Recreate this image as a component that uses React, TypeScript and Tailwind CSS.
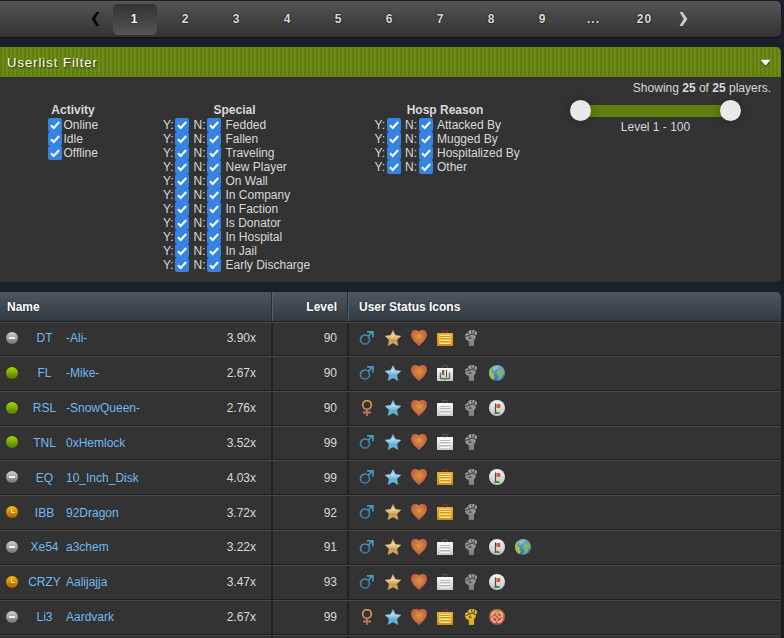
import type { ReactNode } from 'react';

const pages = ['1', '2', '3', '4', '5', '6', '7', '8', '9', '...', '20'];
const specials = ['Fedded', 'Fallen', 'Traveling', 'New Player', 'On Wall', 'In Company', 'In Faction', 'Is Donator', 'In Hospital', 'In Jail', 'Early Discharge'];
const reasons = ['Attacked By', 'Mugged By', 'Hospitalized By', 'Other'];

type Player = { status: 'off' | 'on' | 'idle'; tag: string; name: string; ratio: string; level: number; icons: string[]; short?: boolean; low?: boolean };
const players: Player[] = [
  { status: 'off', tag: 'DT', name: '-Ali-', ratio: '3.90x', level: 90, icons: ['male', 'gold', 'heart', 'caseGold', 'fist'], short: true },
  { status: 'on', tag: 'FL', name: '-Mike-', ratio: '2.67x', level: 90, icons: ['male', 'blue', 'heart', 'caseLaw', 'fist', 'globe'] },
  { status: 'on', tag: 'RSL', name: '-SnowQueen-', ratio: '2.76x', level: 90, icons: ['female', 'blue', 'heart', 'case', 'fist', 'flag'] },
  { status: 'on', tag: 'TNL', name: '0xHemlock', ratio: '3.52x', level: 99, icons: ['male', 'blue', 'heart', 'case', 'fist'], short: true, low: true },
  { status: 'off', tag: 'EQ', name: '10_Inch_Disk', ratio: '4.03x', level: 99, icons: ['male', 'blue', 'heart', 'caseGold', 'fist', 'flag'], low: true },
  { status: 'idle', tag: 'IBB', name: '92Dragon', ratio: '3.72x', level: 92, icons: ['male', 'gold', 'heart', 'caseGold', 'fist'], low: true },
  { status: 'off', tag: 'Xe54', name: 'a3chem', ratio: '3.22x', level: 91, icons: ['male', 'gold', 'heart', 'case', 'fist', 'flag', 'globe'] },
  { status: 'idle', tag: 'CRZY', name: 'Aalijajja', ratio: '3.47x', level: 93, icons: ['male', 'gold', 'heart', 'case', 'fist', 'flag'] },
  { status: 'off', tag: 'Li3', name: 'Aardvark', ratio: '2.67x', level: 99, icons: ['female', 'blue', 'heart', 'caseGold', 'fistGold', 'target'] },
];

function Gradients() {
  const list: [string, string[]][] = [
    ['g-gold', ['#d9a760', '#eed6a0', '#c99a4e', '#dcb26c']],
    ['g-blue', ['#78b8e0', '#b4dcf2', '#62aed8', '#68b4dc']],
    ['g-case', ['#fafafa', '#c9c9c9']],
    ['g-caseGold', ['#f0b030', '#d08a18']],
    ['g-fist', ['#a9a9a9', '#7b7b7b']],
    ['g-fistGold', ['#f0cc3c', '#d9a41c']],
    ['g-ball', ['#f2f2f2', '#c3c3c3']],
    ['g-globe', ['#6fa9d8', '#2a75a8']],
    ['g-target', ['#d08040', '#c04640']],
    ['g-off', ['#d0d0d0', '#727272']],
    ['g-on', ['#a3d900', '#537800']],
    ['g-idle', ['#ffbf00', '#b25900']],
  ];
  return (
    <svg className="absolute size-0">
      <defs>
        {list.map(([id, stops]) => (
          <linearGradient key={id} id={id} x1="0" y1="0" x2="0" y2="1">
            {stops.map((c, i) => <stop key={i} offset={i / (stops.length - 1)} stopColor={c} />)}
          </linearGradient>
        ))}
        <linearGradient id="g-male" gradientUnits="userSpaceOnUse" x1="0" y1="0" x2="0" y2="16">
          <stop stopColor="#48a2c8" />
          <stop offset="1" stopColor="#3f6f9c" />
        </linearGradient>
        <linearGradient id="g-female" gradientUnits="userSpaceOnUse" x1="0" y1="0" x2="0" y2="16">
          <stop stopColor="#d8a050" />
          <stop offset="1" stopColor="#c06464" />
        </linearGradient>
        <radialGradient id="g-heart" cx=".5" cy=".42" r=".6">
          <stop offset="0" stopColor="#dc9c3c" />
          <stop offset=".5" stopColor="#cc7442" />
          <stop offset="1" stopColor="#bd5145" />
        </radialGradient>
      </defs>
    </svg>
  );
}

function drawing(kind: string): ReactNode {
  switch (kind) {
    case 'male':
      return (
        <g fill="none" stroke="url(#g-male)" strokeWidth="1.7">
          <circle cx="6" cy="9.500" r="4.500" />
          <path d="M9.200 6.300 13.300 2.200M8 1.900h5.900V7.500" />
        </g>
      );
    case 'female':
      return (
        <g fill="none" stroke="url(#g-female)" strokeWidth="1.8">
          <circle cx="8" cy="5" r="4.3" />
          <path d="M8 9.4V16M4 12.500h8" />
        </g>
      );
    case 'gold':
    case 'blue':
      return (
        <path
          d="M8 .2 10.400 5.300 16 6 11.900 9.900 13.100 15.700 8 12.900 2.900 15.700 4.100 9.900 0 6 5.600 5.300z"
          fill={kind === 'gold' ? 'url(#g-gold)' : 'url(#g-blue)'}
          stroke={kind === 'gold' ? '#d9ae66' : '#70b6de'}
          strokeWidth=".3"
        />
      );
    case 'heart':
      return <path d="M8 1.500C7 .3 5.500 0 4 0 1.500 0 0 2 0 4.500 0 8.500 4 12.500 8 16c4-3.500 8-7.500 8-11.500C16 2 14.500 0 12 0 10.500 0 9 .3 8 1.500z" fill="url(#g-heart)" />;
    case 'case':
    case 'caseGold':
    case 'caseLaw': {
      const gold = kind === 'caseGold';
      return (
        <>
          <path d="M5.500 3V1.500Q5.500.500 6.500.500h3q1 0 1 1V3" fill="none" stroke={gold ? '#962c26' : '#5c5c5c'} strokeWidth="1" />
          <rect x="0" y="3" width="16" height="13" rx=".5" fill={gold ? 'url(#g-caseGold)' : 'url(#g-case)'} />
          {kind === 'caseLaw' ? (
            <>
              <path d="M3.500 7.500v6h3.200l1.300 1 1.300-1h3.200v-6" fill="none" stroke="#54764d" strokeWidth="1.300" />
              <path d="M6 5v5" stroke="#b04444" strokeWidth="2" />
              <path d="M7.500 5v8" stroke="#bbb" strokeWidth="1" />
              <path d="M9.500 5v7" stroke="#484848" strokeWidth="1" />
            </>
          ) : (
            <>
              {gold && <path d="M2 5h12v9H2z" fill="#f2c440" />}
              <path d="M3 7.500h10M3 10.500h10M3 13.500h10" stroke={gold ? '#fbe9a8' : '#f6f6f6'} />
              <path d="M3 5.500h10" stroke={gold ? '#fbe9a8' : '#fafafa'} />
              <path d="M3 8.500h10M3 11.500h10M3 6.500h10" stroke={gold ? '#cf951c' : '#b8b8b8'} />
            </>
          )}
        </>
      );
    }
    case 'fist':
    case 'fistGold':
      return (
        <>
          <path
            d="M1.800 6.500 2.600 4 5 2.800 5.600.9 8 0 9.400.6 11 .1 12.200 1 13.900 1.800 13.800 4.200 12.700 6 12.700 8 11 10.600V16H5.800v-4.800L2.800 9.400z"
            fill={kind === 'fist' ? 'url(#g-fist)' : 'url(#g-fistGold)'}
          />
          <path d="M5.200 2.600 6.500 5.500M8.500.6 9.200 3.900M11.600.8 11 4.600M2.300 6.600 5.800 5.400M7.300 6.500 6 8.300 8.600 8.200M6.500 5 9.600 4.300 12.800 5.600" stroke="#333" strokeWidth=".9" fill="none" />
        </>
      );
    case 'globe':
      return (
        <>
          <circle cx="8" cy="8" r="8" fill="url(#g-globe)" />
          <path d="M2 2.700C.5 4.300-.2 6.300.1 9c.4 2.800 1.900 4.900 4.200 6l1.500-2.500-1.300-2 .7-2-2.200-1L2 5.700l1-1.600z" fill="#a4bf45" />
          <path d="M4.500 1.500 9 .6l1 1.700L8.500 4l-2.200.8L3 4.500z" fill="#8fbcae" />
          <path d="m8 6 2.800-1.900 3.700.8 1 3.500-2.300 1.800-.8 3.300-2.500.7-1-4.200L7 8z" fill="#84b070" />
          <path d="m5 3 2.500.6-2 2-1.700.3M8 13.600l2 1" stroke="#91bedc" strokeWidth=".9" fill="none" />
        </>
      );
    case 'flag':
      return (
        <>
          <circle cx="8" cy="8" r="8" fill="url(#g-ball)" />
          <path d="M4.500 13.500Q6 11.200 9 12q2 .4 2.200 1.400-3 1.200-6.700.1z" fill="#419336" />
          <path d="M6.500 3.500v9" stroke="#594537" strokeWidth="1.100" />
          <path d="M7 4h4.200v4H7z" fill="#c65a3d" />
          <path d="M7 4h1.500v4H7z" fill="#db8a54" />
        </>
      );
    default:
      return (
        <>
          <circle cx="8" cy="8" r="8" fill="url(#g-target)" />
          <circle cx="8" cy="8" r="5.500" fill="none" stroke="#f4ddd0" strokeWidth="1.200" strokeDasharray="6.640 2" strokeDashoffset="-1" />
          <path d="M8 3.500v9M3.500 8h9" stroke="#f0cdbb" strokeWidth="1" />
          <circle cx="8" cy="8" r="1.200" fill="#c9603f" />
        </>
      );
  }
}

function StatusIcon({ kind }: { kind: string }) {
  return <svg viewBox="0 0 16 16" className="size-4 shrink-0">{drawing(kind)}</svg>;
}

function Presence({ status }: { status: Player['status'] }) {
  const fill = status === 'off' ? 'url(#g-off)' : status === 'on' ? 'url(#g-on)' : 'url(#g-idle)';
  return (
    <svg viewBox="0 0 12 12" className="ml-1.5 size-3 shrink-0">
      <circle cx="6" cy="6" r="6" fill={fill} />
      {status === 'off' && <path d="M3 5h6v2H3z" fill="#f5f5f5" />}
      {status === 'idle' && <path d="M5.500 3v3.500H9" fill="none" stroke="#fff3d6" />}
    </svg>
  );
}

function Check() {
  return (
    <svg viewBox="0 0 14 14" className="size-3.5 shrink-0">
      <rect width="14" height="14" rx="2" fill="#3584e4" />
      <path d="m3 7.300 2.700 2.700L11.200 4" fill="none" stroke="#fff" strokeWidth="2" />
    </svg>
  );
}

function YesNo({ label }: { label: string }) {
  return (
    <div className="flex h-3.5 items-center">
      <span className="w-3">Y:</span><Check />
      <span className="ml-[4.5px] w-[13.5px]">N:</span><Check />
      <span className="ml-[4.5px]">{label}</span>
    </div>
  );
}

function YesNoTight({ label }: { label: string }) {
  return (
    <div className="flex h-3.5 items-center">
      <span className="ml-[-0.5px] w-[12.5px]">Y:</span><Check />
      <span className="ml-1 w-3.5">N:</span><Check />
      <span className="ml-1">{label}</span>
    </div>
  );
}

export default function App() {
  return (
    <div className="h-[638px] w-[784px] overflow-hidden bg-[#192028] pt-px font-['Liberation_Sans',Arial,sans-serif] text-xs text-[#d9d9d9]">
      <Gradients />
      <div className="w-[781px]">
        <nav className="flex h-9 items-center rounded-r-[5px] bg-linear-to-b from-[#555] to-[#333] pl-[91px] font-bold tracking-[1px] shadow-[0_1px_2px_#0008] text-shadow-[0_0_2px_#000]">
          <svg viewBox="0 0 9 14" className="mr-[13px] h-3.5 w-[9px] shrink-0"><path d="M5.400 0h3L4.100 7l4.300 7h-3L.5 7z" fill="#050505" /></svg>
          <div className="flex gap-[7px]">
            {pages.map((p) => (
              <span key={p} className={`flex h-[31px] w-11 items-center justify-center rounded-[5px] pr-px ${p === '1' ? 'bg-linear-to-b from-[#333] to-[#555] text-white' : ''}`}>{p}</span>
            ))}
          </div>
          <svg viewBox="0 0 9 14" className="ml-3 h-3.5 w-[9px] shrink-0"><path d="M.5 0h3l4.900 7-4.900 7h-3l4.300-7z" fill="#ccc" /></svg>
        </nav>

        <section className="mt-2.5 h-[235px] overflow-hidden rounded-r-[5px] bg-[#333]">
          <header className="flex h-[30px] items-center justify-between bg-[repeating-linear-gradient(90deg,#627e0d_0_2px,#6d8a1c_2px_4px)] pr-2.5 pl-[7px] text-[13px] tracking-[1px] text-white text-shadow-[1px_1px_2px_#000a]">
            <span className="pt-0.5">Userlist Filter</span>
            <svg viewBox="0 0 11 8" className="h-2 w-[11px] drop-shadow-[0_1px_1px_#0008]"><path d="M.500 1.800h10L6.200 7H4.800z" fill="#fff" /></svg>
          </header>
          <div className="flex">
            <div className="box-content w-[50px] pt-[26px] pl-12">
              <div className="h-[15px] text-center font-bold leading-[14px]">Activity</div>
              {['Online', 'Idle', 'Offline'].map((s) => (
                <div key={s} className="flex h-3.5 items-center"><Check /><span className="ml-[1.5px]">{s}</span></div>
              ))}
            </div>
            <div className="ml-[65px] w-[148px] whitespace-nowrap pt-[26px]">
              <div className="h-[15px] w-[143px] text-center font-bold leading-[14px]">Special</div>
              {specials.map((s) => <YesNo key={s} label={s} />)}
            </div>
            <div className="ml-16 w-[146px] whitespace-nowrap pt-[26px]">
              <div className="h-[15px] w-[140px] text-center font-bold leading-[14px]">Hosp Reason</div>
              {reasons.map((s) => <YesNoTight key={s} label={s} />)}
            </div>
            <div className="flex-1 pt-1 pr-2.5 pl-[49px]">
              <div className="text-right leading-[14px]">Showing <b>25</b> of <b>25</b> players.</div>
              <div className="mt-[5px] flex h-[21px] w-[171px] items-center">
                <span className="z-10 size-[21px] shrink-0 rounded-full bg-[#e9e9e9] shadow-[0_0_10px_#0004]" />
                <span className="-mx-2 h-3 flex-1 bg-[#627e0d]" />
                <span className="z-10 size-[21px] shrink-0 rounded-full bg-[#e9e9e9] shadow-[0_0_10px_#0004]" />
              </div>
              <div className="mt-[-1px] w-[171px] text-center leading-[14px]">Level 1 - 100</div>
            </div>
          </div>
        </section>

        <section className="mt-2.5">
          <header className="flex h-[30px] items-stretch rounded-tr-[5px] border-b border-[#202020] bg-linear-to-b from-[#4e565e] to-[#323b42] font-bold leading-[31px] text-white text-shadow-[0_0_2px_#0008]">
            <div className="w-[272px] border-r border-[#252c32] pl-[7px]">Name</div>
            <div className="w-[76px] border-r border-l border-r-[#252c32] border-l-[#566069] pr-2.5 text-right">Level</div>
            <div className="flex-1 border-l border-[#566069] pl-2.5">User Status Icons</div>
          </header>
          {players.map((p) => {
            const pad = p.short ? 'pb-0.5' : 'pb-px';
            const drop = p.low ? 'pt-0.5' : '';
            return (
              <div key={p.name} className={`flex items-stretch border-t border-b border-t-[#484848] border-b-[#202020] bg-[#333] ${p.short ? 'h-[34px]' : 'h-[35px]'}`}>
                <div className={`flex w-[273px] items-center border-r-2 border-[#222] ${pad}`}>
                  <Presence status={p.status} />
                  <span className={`ml-1.5 w-[41px] text-center text-[#70b9f2] ${drop}`}>{p.tag}</span>
                  <span className={`ml-px flex-1 text-[#70b9f2] ${drop}`}>{p.name}</span>
                  <span className={`mr-[15px] ${drop}`}>{p.ratio}</span>
                </div>
                <div className={`flex w-[76px] items-center justify-end border-r-2 border-[#222] pr-2.5 ${pad}`}>
                  <span className={drop}>{p.level}</span>
                </div>
                <div className={`flex items-center gap-2.5 pl-2.5 ${pad}`}>
                  {p.icons.map((k) => <StatusIcon key={k} kind={k} />)}
                </div>
              </div>
            );
          })}
          <div className="flex h-4 border-t border-[#484848] bg-[#333]">
            <div className="w-[273px] border-r-2 border-[#222]" />
            <div className="w-[76px] border-r-2 border-[#222]" />
          </div>
        </section>
      </div>
    </div>
  );
}
